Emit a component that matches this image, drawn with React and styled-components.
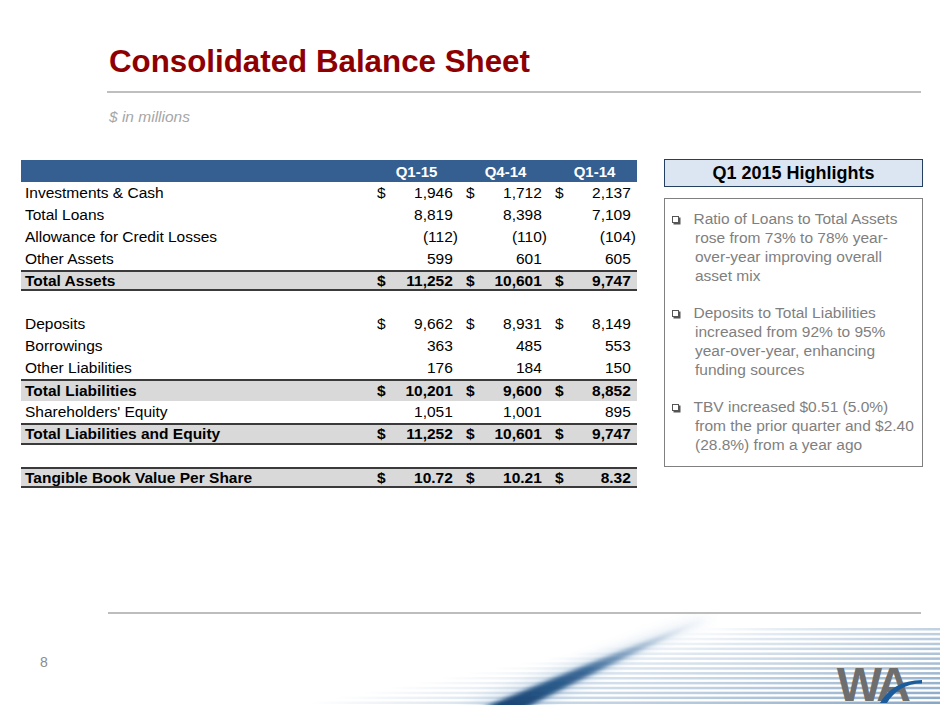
import React from 'react';
import styled, { createGlobalStyle } from 'styled-components';

const GlobalStyle = createGlobalStyle`
  html, body { margin: 0; padding: 0; background: #ffffff; }
  body { font-family: "Liberation Sans", Arial, sans-serif; }
  *, *::before, *::after { box-sizing: border-box; }
`;

const Slide = styled.div`
  width: 940px;
  height: 705px;
  display: flex;
  flex-direction: column;
  overflow: hidden;
  background: #ffffff;
`;

const Header = styled.header`
  padding: 46px 0 0 109px;
`;

const Title = styled.h1`
  margin: 0;
  font-size: 31.3px;
  line-height: 31px;
  font-weight: 700;
  color: #8e0000;
  white-space: nowrap;
`;

const TitleRule = styled.div`
  width: 814px;
  height: 2px;
  margin: 14px 0 0 -2px;
  background: #bfbfbf;
`;

const Subtitle = styled.div`
  margin-top: 16px;
  font-size: 15.5px;
  line-height: 15.5px;
  font-style: italic;
  color: #a6a6a6;
`;

const Main = styled.main`
  display: flex;
  align-items: flex-start;
  margin-top: 34.5px;
  padding-left: 21px;
`;

const Table = styled.div`
  width: 616px;
  margin-top: 1px;
  font-size: 15.5px;
  color: #000000;
`;

const GRID = '349px repeat(3, 89px)';

const HeadRow = styled.div`
  display: grid;
  grid-template-columns: ${GRID};
  align-items: center;
  height: 22px;
  background: #365f91;
  color: #ffffff;
  font-size: 15px;
  font-weight: 700;
`;

const HeadCell = styled.div`
  text-align: center;
  padding-left: 4px;
`;

const Row = styled.div`
  display: grid;
  grid-template-columns: ${GRID};
  align-items: center;
  height: 21.9px;
  font-weight: ${(p) => (p.$total ? 700 : 400)};
  background: ${(p) => (p.$total ? '#d9d9d9' : 'transparent')};
  border-top: ${(p) => (p.$total ? '2px solid #3a3a3a' : '0')};
  border-bottom: ${(p) => (p.$closed ? '2px solid #3a3a3a' : '0')};
`;

const Label = styled.div`
  padding-left: 4px;
  white-space: nowrap;
`;

const Amount = styled.div`
  display: flex;
  justify-content: space-between;
  padding: 0 1px 0 7px;
  white-space: nowrap;
`;

const Value = styled.span`
  padding-right: ${(p) => (p.$neg ? '0' : '5.2px')};
`;

const Panel = styled.aside`
  width: 259px;
  margin-left: 27px;
  display: flex;
  flex-direction: column;
  gap: 11px;
`;

const PanelTitle = styled.div`
  height: 28px;
  display: flex;
  align-items: center;
  justify-content: center;
  background: #dce6f2;
  border: 1.5px solid #243f60;
  font-size: 18px;
  font-weight: 700;
  color: #000000;
`;

const PanelBody = styled.div`
  border: 1.5px solid #808080;
  padding: 11px 4px 11px 7px;
  font-size: 15.5px;
  line-height: 18.9px;
  color: #7f7f7f;
`;

const Bullet = styled.div`
  display: flex;
  & + & {
    margin-top: 18.5px;
  }
`;

const BulletMark = styled.div`
  width: 21.5px;
  flex-shrink: 0;
  &::before {
    content: '';
    display: block;
    width: 7px;
    height: 7px;
    margin-top: 6px;
    border: 1px solid #555555;
    box-shadow: 1.5px 1.5px 0 #555555;
  }
`;

const BulletText = styled.div`
  white-space: nowrap;
`;

const Line = styled.div`
  padding-left: ${(p) => (p.$first ? '0' : '1.5px')};
`;

const Footer = styled.footer`
  position: relative;
  margin-top: auto;
  height: 93px;
`;

const Swoosh = styled.svg`
  position: absolute;
  left: 0;
  top: 0;
  width: 940px;
  height: 93px;
  z-index: 0;
`;

const FooterRule = styled.div`
  position: relative;
  z-index: 1;
  width: 813px;
  height: 2px;
  margin-left: 108px;
  background: #bdbdbd;
`;

const BottomRow = styled.div`
  position: relative;
  z-index: 1;
  display: flex;
  justify-content: space-between;
  align-items: flex-start;
  margin-top: 40px;
  padding: 0 32px 0 40px;
`;

const PageNum = styled.div`
  font-size: 14px;
  line-height: 16px;
  color: #8c8c8c;
`;

const LogoMark = styled.div`
  position: relative;
  margin-top: 13px;
  height: 36px;
  font-size: 48px;
  line-height: 36px;
  font-weight: 700;
  letter-spacing: -3px;
  color: #6e6e6e;
  white-space: nowrap;
`;

const LogoArc = styled.svg`
  position: absolute;
  left: 0;
  top: 0;
  width: 86px;
  height: 36px;
  overflow: visible;
`;

const rows = [
  { label: 'Investments & Cash', vals: ['1,946', '1,712', '2,137'], dollar: true },
  { label: 'Total Loans', vals: ['8,819', '8,398', '7,109'] },
  { label: 'Allowance for Credit Losses', vals: ['(112)', '(110)', '(104)'] },
  { label: 'Other Assets', vals: ['599', '601', '605'] },
  { label: 'Total Assets', vals: ['11,252', '10,601', '9,747'], dollar: true, total: true, closed: true },
  { blank: true },
  { label: 'Deposits', vals: ['9,662', '8,931', '8,149'], dollar: true },
  { label: 'Borrowings', vals: ['363', '485', '553'] },
  { label: 'Other Liabilities', vals: ['176', '184', '150'] },
  { label: 'Total Liabilities', vals: ['10,201', '9,600', '8,852'], dollar: true, total: true },
  { label: "Shareholders' Equity", vals: ['1,051', '1,001', '895'] },
  { label: 'Total Liabilities and Equity', vals: ['11,252', '10,601', '9,747'], dollar: true, total: true, closed: true },
  { blank: true },
  { label: 'Tangible Book Value Per Share', vals: ['10.72', '10.21', '8.32'], dollar: true, total: true, closed: true },
];

const highlights = [
  ['Ratio of Loans to Total Assets', 'rose from 73% to 78% year-', 'over-year improving overall', 'asset mix'],
  ['Deposits to Total Liabilities', 'increased from 92% to 95%', 'year-over-year, enhancing', 'funding sources'],
  ['TBV increased $0.51 (5.0%)', 'from the prior quarter and $2.40', '(28.8%) from a year ago'],
];

function SwooshArt() {
  const stripes = [];
  for (let i = 0; i < 16; i++) {
    const y = 16 + i * 4.9;
    const x0 = 700 - i * 26;
    stripes.push(
      <rect
        key={i}
        x={x0}
        y={y}
        width={940 - x0}
        height={2.5}
        fill="url(#stripeFade)"
        opacity={0.5 + i * 0.03}
      />
    );
  }
  return (
    <Swoosh viewBox="0 0 940 93" preserveAspectRatio="none" aria-hidden="true">
      <defs>
        <linearGradient id="stripeFade" x1="0" y1="0" x2="1" y2="0">
          <stop offset="0" stopColor="#9fbad4" stopOpacity="0" />
          <stop offset="0.35" stopColor="#9fbad4" stopOpacity="0.55" />
          <stop offset="1" stopColor="#7b9dbf" stopOpacity="0.95" />
        </linearGradient>
        <linearGradient id="streakFade" x1="0" y1="1" x2="1" y2="0">
          <stop offset="0" stopColor="#0f3c6c" stopOpacity="1" />
          <stop offset="0.45" stopColor="#1f5387" stopOpacity="0.85" />
          <stop offset="1" stopColor="#6f97bf" stopOpacity="0" />
        </linearGradient>
        <filter id="blurSoft" x="-20%" y="-20%" width="140%" height="140%">
          <feGaussianBlur stdDeviation="2.2" />
        </filter>
        <filter id="blurWide" x="-30%" y="-30%" width="160%" height="160%">
          <feGaussianBlur stdDeviation="7" />
        </filter>
      </defs>
      {stripes}
      <path
        d="M455 100 Q 585 48 705 6 L 712 6 Q 600 55 535 100 Z"
        fill="#9dbbd8"
        opacity="0.45"
        filter="url(#blurWide)"
      />
      <path
        d="M478 98 Q 590 50 702 8 L 706 8 Q 605 54 522 98 Z"
        fill="url(#streakFade)"
        filter="url(#blurSoft)"
      />
    </Swoosh>
  );
}

function Logo() {
  return (
    <LogoMark aria-label="WA logo">
      WA
      <LogoArc viewBox="0 0 86 36" aria-hidden="true">
        <path d="M43 36 C 51 22, 65 13, 85 13 L 85 16.5 C 69 16.5, 57 24, 50 36 Z" fill="#1b5c9c" />
      </LogoArc>
    </LogoMark>
  );
}

export default function App() {
  return (
    <>
      <GlobalStyle />
      <Slide>
        <Header>
          <Title>Consolidated Balance Sheet</Title>
          <TitleRule />
          <Subtitle>$ in millions</Subtitle>
        </Header>
        <Main>
          <Table>
            <HeadRow>
              <div />
              <HeadCell>Q1-15</HeadCell>
              <HeadCell>Q4-14</HeadCell>
              <HeadCell>Q1-14</HeadCell>
            </HeadRow>
            {rows.map((r, i) =>
              r.blank ? (
                <Row key={i} />
              ) : (
                <Row key={i} $total={r.total} $closed={r.closed}>
                  <Label>{r.label}</Label>
                  {r.vals.map((v, j) => (
                    <Amount key={j}>
                      <span>{r.dollar ? '$' : ''}</span>
                      <Value $neg={v.startsWith('(')}>{v}</Value>
                    </Amount>
                  ))}
                </Row>
              )
            )}
          </Table>
          <Panel>
            <PanelTitle>Q1 2015 Highlights</PanelTitle>
            <PanelBody>
              {highlights.map((lines, i) => (
                <Bullet key={i}>
                  <BulletMark />
                  <BulletText>
                    {lines.map((l, k) => (
                      <Line key={k} $first={k === 0}>
                        {l}
                      </Line>
                    ))}
                  </BulletText>
                </Bullet>
              ))}
            </PanelBody>
          </Panel>
        </Main>
        <Footer>
          <SwooshArt />
          <FooterRule />
          <BottomRow>
            <PageNum>8</PageNum>
            <Logo />
          </BottomRow>
        </Footer>
      </Slide>
    </>
  );
}
